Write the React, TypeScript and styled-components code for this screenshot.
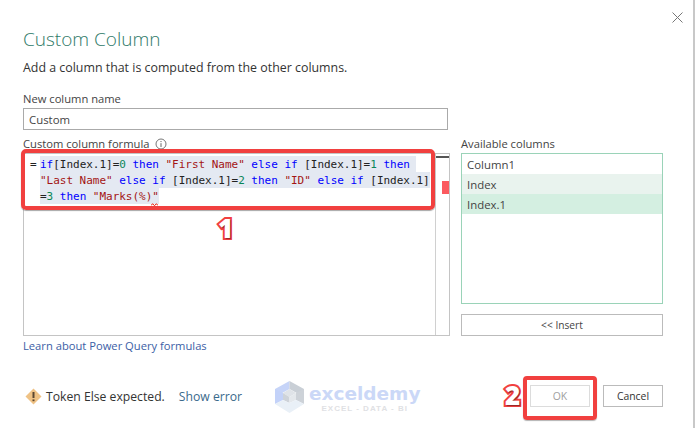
import React from "react";
import styled, { createGlobalStyle } from "styled-components";

const GlobalStyle = createGlobalStyle`
  html, body {
    margin: 0;
    padding: 0;
    background: #fff;
  }
  body {
    font-family: "Open Sans", "Noto Sans", sans-serif;
  }
`;

const columns = [
  { name: "Column1", tone: "none" },
  { name: "Index", tone: "hover" },
  { name: "Index.1", tone: "active" },
] as const;

type Tone = (typeof columns)[number]["tone"];

const toneColors: Record<Tone, string> = {
  none: "transparent",
  hover: "#e9f3ee",
  active: "#d4efe1",
};

const CloseIcon = () => (
  <svg width="11" height="11" viewBox="0 0 11 11">
    <path d="M0.5 0.5L10.5 10.5M10.5 0.5L0.5 10.5" stroke="#777" strokeWidth="1" fill="none" />
  </svg>
);

const InfoIcon = () => (
  <svg width="12" height="12" viewBox="0 0 12 12">
    <circle cx="6" cy="6" r="5" stroke="#666" strokeWidth="0.9" fill="none" />
    <path d="M6 5.2V9M6 3V4.1" stroke="#666" strokeWidth="1" fill="none" />
  </svg>
);

const WarningIcon = () => (
  <svg width="17" height="17" viewBox="0 0 17 17">
    <path d="M8.5 0.5L16.5 8.5L8.5 16.5L0.5 8.5Z" fill="#efc285" />
    <path d="M8.5 4V10" stroke="#5a4630" strokeWidth="2" />
    <path d="M8.5 11.4V13.2" stroke="#5a4630" strokeWidth="2" />
  </svg>
);

const LogoMark = () => (
  <svg width="29" height="32" viewBox="0 0 29 32">
    <path d="M14.5 0L0 8V16L14.5 8Z" fill="#c6d4f8" />
    <path d="M14.5 0L29 8V16L14.5 8Z" fill="#c9cfd6" />
    <path d="M0 8V23L8 19V12Z" fill="#c3d2f9" />
    <path d="M29 8V23L21 19V12Z" fill="#cdd2d8" />
    <path d="M8 12L14.5 8L21 12L14.5 16Z" fill="#dfe3e8" />
    <path d="M8 12L14.5 16V22L8 19Z" fill="#ced3d9" />
    <path d="M21 12L14.5 16V22L21 19Z" fill="#e4e8ec" />
    <path d="M0 23L8 19L14.5 22L21 19L29 23L14.5 32Z" fill="#e9f0f7" />
  </svg>
);

const SquiggleMark = () => (
  <svg width="7" height="3" viewBox="0 0 7 3">
    <path d="M0 2.5L1.5 0.8L3.5 2.5L5.5 0.8L7 2.5" stroke="#e51400" strokeWidth="1" fill="none" />
  </svg>
);

export default function App() {
  return (
    <>
      <GlobalStyle />
      <Dialog>
        <TopBar>
          <CloseButton>
            <CloseIcon />
          </CloseButton>
        </TopBar>
        <Title>Custom Column</Title>
        <Subtitle>Add a column that is computed from the other columns.</Subtitle>
        <NameLabel>New column name</NameLabel>
        <NameInput>Custom</NameInput>

        <Columns>
          <LeftColumn>
            <FormulaLabel>
              Custom column formula <InfoIcon />
            </FormulaLabel>
            <Editor>
              <CodeArea>
                <Gutter>=</Gutter>
                <Code>
                  <CodeLine>
                    <Selected>
                      <Kw>if</Kw>[Index.1]=<Num>0</Num> <Kw>then</Kw> <Str>"First Name"</Str>{" "}
                      <Kw>else</Kw> <Kw>if</Kw> [Index.1]=<Num>1</Num> <Kw>then</Kw>{" "}
                    </Selected>
                  </CodeLine>
                  <CodeLine>
                    <Selected>
                      <Str>"Last Name"</Str> <Kw>else</Kw> <Kw>if</Kw> [Index.1]=<Num>2</Num>{" "}
                      <Kw>then</Kw> <Str>"ID"</Str> <Kw>else</Kw> <Kw>if</Kw> [Index.1]
                    </Selected>
                  </CodeLine>
                  <CodeLine>
                    <Selected>
                      =<Num>3</Num> <Kw>then</Kw> <Str>"Marks(%)</Str>
                      <ErrorToken>
                        "
                        <SquiggleSlot>
                          <SquiggleMark />
                        </SquiggleSlot>
                      </ErrorToken>
                    </Selected>
                  </CodeLine>
                </Code>
              </CodeArea>
              <Scrollbar>
                <ScrollMark />
              </Scrollbar>
            </Editor>
            <HelpLink>Learn about Power Query formulas</HelpLink>
            <FormulaHighlight />
            <Numeral $left={195} $top={77}>
              1
            </Numeral>
          </LeftColumn>

          <RightColumn>
            <FieldLabel>Available columns</FieldLabel>
            <ColumnList>
              {columns.map((c) => (
                <ColumnRow key={c.name} $tone={c.tone}>
                  {c.name}
                </ColumnRow>
              ))}
            </ColumnList>
            <InsertButton>&lt;&lt; Insert</InsertButton>
          </RightColumn>
        </Columns>

        <Footer>
          <Status>
            <WarningIcon />
            <StatusText>Token Else expected.</StatusText>
            <ShowError>Show error</ShowError>
          </Status>
          <Watermark>
            <LogoMark />
            <WatermarkText>
              <Brand>exceldemy</Brand>
              <Tagline>EXCEL - DATA - BI</Tagline>
            </WatermarkText>
          </Watermark>
          <Actions>
            <OkWrap>
              <Numeral $left={-25} $top={-5}>
                2
              </Numeral>
              <OkHighlight />
              <ActionButton $disabled>OK</ActionButton>
            </OkWrap>
            <ActionButton>Cancel</ActionButton>
          </Actions>
        </Footer>
      </Dialog>
    </>
  );
}

const Dialog = styled.div`
  width: 695px;
  height: 428px;
  box-sizing: border-box;
  border-right: 2px solid #c8c8c8;
  padding: 0 30px 0 23px;
  display: flex;
  flex-direction: column;
  overflow: hidden;
  color: #333;
`;

const TopBar = styled.div`
  height: 25px;
  display: flex;
  justify-content: flex-end;
  margin-right: -20px;
`;

const CloseButton = styled.div`
  padding-top: 6px;
  height: 11px;
`;

const Title = styled.div`
  font-size: 19px;
  font-weight: 300;
  line-height: 28px;
  color: #2f7a68;
`;

const Subtitle = styled.div`
  margin-top: 6px;
  font-size: 12.4px;
  line-height: 18px;
  color: #333;
`;

const FieldLabel = styled.div`
  font-size: 11.2px;
  line-height: 16px;
  color: #444;
`;

const NameLabel = styled(FieldLabel)`
  margin-top: 14px;
`;

const NameInput = styled.div`
  box-sizing: border-box;
  width: 425px;
  height: 22px;
  margin-top: 1px;
  padding-left: 5px;
  border: 1px solid #aaa;
  font-size: 11.4px;
  line-height: 21px;
  color: #444;
`;

const Columns = styled.div`
  margin-top: 6px;
  display: grid;
  grid-template-columns: 427px 202px;
  column-gap: 11px;
`;

const LeftColumn = styled.div`
  position: relative;
`;

const RightColumn = styled.div`
  display: flex;
  flex-direction: column;
`;

const FormulaLabel = styled(FieldLabel)`
  display: flex;
  align-items: center;
  gap: 6px;
`;

const Editor = styled.div`
  box-sizing: border-box;
  height: 183px;
  margin-top: 1px;
  border: 1px solid #c4c4c4;
  display: flex;
`;

const CodeArea = styled.div`
  flex: 1;
  display: flex;
  padding-top: 2px;
  font-family: "DejaVu Sans Mono", "Liberation Mono", monospace;
  font-size: 11px;
  letter-spacing: -0.02px;
  line-height: 18px;
  color: #222;
  white-space: pre;
`;

const Gutter = styled.div`
  width: 16px;
  padding-left: 6px;
  box-sizing: border-box;
`;

const Code = styled.div`
  display: flex;
  flex-direction: column;
`;

const CodeLine = styled.div`
  height: 16px;
`;

const Selected = styled.div`
  width: fit-content;
  height: 16px;
  background: #e4e9f2;
`;

const Kw = styled.span`
  color: #0000ff;
`;

const Str = styled.span`
  color: #a31515;
`;

const Num = styled.span`
  color: #098658;
`;

const ErrorToken = styled.span`
  position: relative;
  color: #a31515;
`;

const SquiggleSlot = styled.span`
  position: absolute;
  left: -1px;
  top: 13px;
  line-height: 0;
`;

const Scrollbar = styled.div`
  box-sizing: border-box;
  width: 14px;
  border-left: 1px solid #d0d0d0;
  padding-top: 27px;
  background: linear-gradient(#fff 2px, #555 2px, #555 4px, #fff 4px);
`;

const ScrollMark = styled.div`
  width: 7px;
  height: 13px;
  margin-left: 6px;
  background: #fb5a5f;
`;

const HelpLink = styled.div`
  margin-top: 2px;
  font-size: 11.2px;
  line-height: 16px;
  color: #3b5ea5;
`;

const FormulaHighlight = styled.div`
  position: absolute;
  left: -2px;
  top: 13px;
  width: 414px;
  height: 61px;
  box-sizing: border-box;
  border: 4px solid #f1403f;
  border-radius: 5px;
  box-shadow: 0 1px 1px rgba(0, 0, 0, 0.35);
`;

const Numeral = styled.div<{ $left: number; $top: number }>`
  position: absolute;
  left: ${(p) => p.$left}px;
  top: ${(p) => p.$top}px;
  font-family: "Open Sans", "Liberation Sans", sans-serif;
  font-size: 26px;
  font-weight: 800;
  line-height: 30px;
  color: #fff;
  -webkit-text-stroke: 4px #f1403f;
  paint-order: stroke fill;
  text-shadow: 1px 1px 1px rgba(0, 0, 0, 0.4);
`;

const ColumnList = styled.div`
  box-sizing: border-box;
  height: 151px;
  margin-top: 1px;
  border: 1px solid #9ad3b8;
`;

const ColumnRow = styled.div<{ $tone: Tone }>`
  height: 20px;
  padding-left: 5px;
  font-size: 11.4px;
  line-height: 21px;
  color: #444;
  background: ${(p) => toneColors[p.$tone]};
`;

const InsertButton = styled.div`
  box-sizing: border-box;
  height: 22px;
  margin-top: 10px;
  border: 1px solid #bbb;
  text-align: center;
  font-size: 10.2px;
  line-height: 20px;
  color: #444;
`;

const Footer = styled.div`
  margin-top: 31px;
  height: 22px;
  display: flex;
  align-items: center;
`;

const Status = styled.div`
  width: 252px;
  padding-left: 2px;
  box-sizing: border-box;
  display: flex;
  align-items: center;
  font-size: 12.2px;
`;

const StatusText = styled.span`
  margin-left: 4px;
  color: #333;
`;

const ShowError = styled.span`
  margin-left: 14px;
  color: #3a6a8c;
`;

const Watermark = styled.div`
  display: flex;
  align-items: flex-start;
  gap: 5px;
  height: 32px;
  margin-top: 2px;
`;

const WatermarkText = styled.div`
  display: flex;
  flex-direction: column;
  align-items: center;
  padding-top: 3px;
`;

const Brand = styled.div`
  font-family: "DejaVu Sans", sans-serif;
  font-size: 18.5px;
  font-weight: 700;
  line-height: 20px;
  color: #cbd8f7;
`;

const Tagline = styled.div`
  font-family: "Liberation Sans", sans-serif;
  font-size: 8px;
  font-weight: 700;
  letter-spacing: 1px;
  line-height: 10px;
  color: #dfe1e4;
`;

const Actions = styled.div`
  margin-left: auto;
  display: flex;
  gap: 13px;
`;

const OkWrap = styled.div`
  position: relative;
`;

const OkHighlight = styled.div`
  position: absolute;
  left: -7px;
  top: -9px;
  width: 74px;
  height: 44px;
  box-sizing: border-box;
  border: 4px solid #f1403f;
  border-radius: 4px;
  box-shadow: 0 1px 1px rgba(0, 0, 0, 0.3);
`;

const ActionButton = styled.div<{ $disabled?: boolean }>`
  box-sizing: border-box;
  width: 60px;
  height: 22px;
  border: 1px solid ${(p) => (p.$disabled ? "#dcdcdc" : "#bbb")};
  text-align: center;
  font-size: 10.4px;
  line-height: 20px;
  color: ${(p) => (p.$disabled ? "#a0a0a0" : "#333")};
`;
